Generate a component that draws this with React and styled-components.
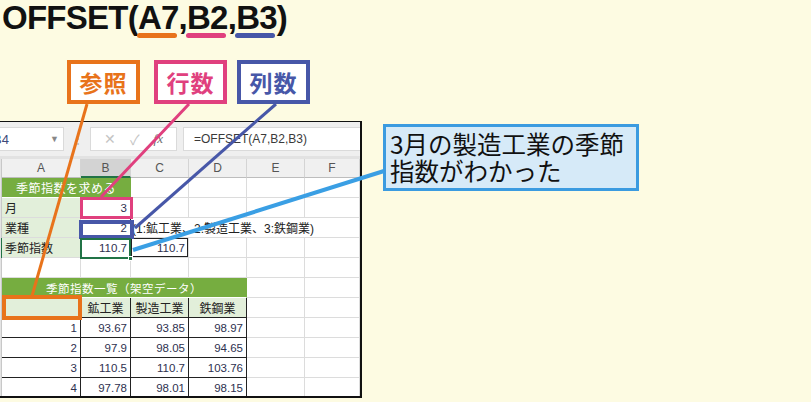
import React from "react";
import styled, { createGlobalStyle, css } from "styled-components";

const ORANGE = "#e8731b";
const PINK = "#e0407e";
const BLUE = "#4757a8";
const SKY = "#3a9fe4";
const BAND = "#76ad40";
const PALE = "#e2efda";

const GlobalStyle = createGlobalStyle`
  html, body { margin: 0; padding: 0; background: #fdfbe2; }
`;

const Page = styled.div`
  position: relative;
  width: 811px;
  height: 402px;
  overflow: hidden;
  background: #fdfbe2;
  font-family: "Liberation Sans", "Noto Sans CJK JP", sans-serif;
`;

const Title = styled.h1`
  margin: 0;
  padding: 1px 0 0 2px;
  font-size: 33px;
  line-height: 33px;
  font-weight: 700;
  letter-spacing: -0.75px;
  color: #111;
`;

const Arg = styled.span`
  position: relative;

  &::after {
    content: "";
    position: absolute;
    left: -1px;
    right: 2px;
    bottom: -2px;
    height: 5px;
    border-radius: 3px;
    background: ${({ $color }) => $color};
  }
`;

const LabelRow = styled.div`
  display: flex;
  padding-left: 67px;
  margin-top: 26px;
`;

const Label = styled.div`
  box-sizing: border-box;
  width: 73px;
  height: 44px;
  margin-left: ${({ $gap }) => $gap || 0}px;
  border: 4px solid ${({ $color }) => $color};
  background: #fff;
  color: ${({ $color }) => $color};
  display: flex;
  align-items: center;
  justify-content: center;
  font-family: "Noto Sans CJK JP", sans-serif;
  font-weight: 700;
  font-size: 23px;
  letter-spacing: 1px;
`;

const Main = styled.div`
  display: flex;
  align-items: flex-start;
  margin-top: 17px;
`;

const Sheet = styled.div`
  box-sizing: border-box;
  width: 362px;
  height: 277px;
  overflow: hidden;
  background: #fff;
  border-top: 1px solid #111;
  border-right: 2px solid #111;
  border-bottom: 2px solid #111;
`;

const Toolbar = styled.div`
  display: flex;
  align-items: center;
  height: 34px;
  background: #efefef;
  border-bottom: 3px solid #e2e2e2;
`;

const NameBox = styled.div`
  box-sizing: border-box;
  width: 64px;
  height: 24px;
  background: #fff;
  border: 1px solid #dadada;
  border-left: none;
  display: flex;
  align-items: center;
  justify-content: space-between;
  padding-right: 4px;
  overflow: hidden;
  font-size: 13px;
  color: #3c4a7a;

  span { margin-left: -7px; }
  i { font-style: normal; font-size: 9px; color: #888; }
`;

const Dots = styled.div`
  width: 26px;
  text-align: center;
  color: #b5b5b5;
  font-size: 12px;
  letter-spacing: -1px;
`;

const FxBox = styled.div`
  box-sizing: border-box;
  width: 87px;
  height: 24px;
  background: #fff;
  border: 1px solid #dadada;
  display: flex;
  align-items: center;
  justify-content: space-around;
  padding: 0 6px;
  color: #c4c4c4;
  font-size: 14px;

  em {
    font-family: "Liberation Serif", serif;
    color: #6e6e6e;
    font-size: 13px;
  }
`;

const Formula = styled.div`
  box-sizing: border-box;
  flex: 1;
  height: 24px;
  margin-left: 6px;
  background: #fff;
  border: 1px solid #dadada;
  border-right: none;
  display: flex;
  align-items: center;
  padding-left: 10px;
  font-size: 12px;
  color: #3a3a3a;
`;

const Grid = styled.div`
  display: grid;
  grid-template-columns: 2px 79px 50px 58px 58px 58px 55px;
  grid-template-rows: 19px;
  grid-auto-rows: 20px;
  font-size: 12px;
`;

const ColHead = styled.div`
  box-sizing: border-box;
  background: ${({ $active }) => ($active ? "#d3d3d3" : "#f0f0f0")};
  border-right: 1px solid #d4d4d4;
  border-bottom: ${({ $active }) => ($active ? "2px solid #217346" : "1px solid #bdbdbd")};
  color: #555;
  display: flex;
  align-items: center;
  justify-content: center;
`;

const RowHead = styled.div`
  box-sizing: border-box;
  background: #e4e4e4;
  border-right: 1px solid ${({ $active }) => ($active ? "#217346" : "#c8c8c8")};
`;

const Cell = styled.div`
  position: relative;
  box-sizing: border-box;
  grid-column: span ${({ $span }) => $span || 1};
  background: ${({ $fill }) => $fill || "#fff"};
  border-right: 1px solid ${({ $boxed }) => ($boxed ? "#222" : "#dcdcdc")};
  border-bottom: 1px solid ${({ $boxed }) => ($boxed ? "#222" : "#dcdcdc")};
  display: flex;
  align-items: center;
  justify-content: ${({ $align }) =>
    $align === "right" ? "flex-end" : $align === "center" ? "center" : "flex-start"};
  padding: 0 3px;
  white-space: nowrap;
  color: ${({ $num }) => ($num ? "#2e3150" : "#222")};
  font-size: ${({ $num }) => ($num ? "11.5px" : "12px")};

  ${({ $band }) =>
    $band &&
    css`
      background: ${BAND};
      color: #fff;
      border-right-color: ${BAND};
      border-bottom-color: #fff;
      letter-spacing: 0.5px;
    `}

  ${({ $outline }) =>
    $outline &&
    css`
      box-shadow: inset 0 0 0 1px #222;
    `}

  ${({ $mark, $w, $inset }) =>
    $mark &&
    css`
      &::after {
        content: "";
        position: absolute;
        inset: ${$inset};
        border: ${$w}px solid ${$mark};
        z-index: 2;
      }
    `}

  ${({ $selected }) =>
    $selected &&
    css`
      &::after {
        content: "";
        position: absolute;
        inset: 0 -1px -2px -1px;
        border: 2px solid #217346;
        z-index: 2;
      }
      &::before {
        content: "";
        position: absolute;
        right: -3px;
        bottom: -4px;
        width: 5px;
        height: 5px;
        background: #217346;
        border: 1px solid #fff;
        box-sizing: border-box;
        z-index: 3;
      }
    `}
`;

const Callout = styled.div`
  box-sizing: border-box;
  width: 256px;
  height: 67px;
  margin: 3px 0 0 21px;
  padding: 3px 2px 0 4px;
  background: #d6eaf8;
  border: 3px solid #3b9be0;
  font-family: "Noto Sans CJK JP", sans-serif;
  font-size: 24.5px;
  line-height: 27px;
  color: #111;
  white-space: nowrap;
  position: relative;
  z-index: 1;
`;

const Leaders = styled.svg`
  position: absolute;
  left: 0;
  top: 0;
  pointer-events: none;
  z-index: 5;
`;

const cols = ["A", "B", "C", "D", "E", "F"];
const data = [
  ["1", "93.67", "93.85", "98.97"],
  ["2", "97.9", "98.05", "94.65"],
  ["3", "110.5", "110.7", "103.76"],
  ["4", "97.78", "98.01", "98.15"],
];

const Blank = ({ n }) =>
  Array.from({ length: n }, (_, i) => <Cell key={i} />);

export default function App() {
  return (
    <Page>
      <GlobalStyle />
      <Title>
        OFFSET(<Arg $color={ORANGE}>A7</Arg>,<Arg $color={PINK}>B2</Arg>,<Arg $color={BLUE}>B3</Arg>)
      </Title>

      <LabelRow>
        <Label $color={ORANGE}>参照</Label>
        <Label $color={PINK} $gap={14}>行数</Label>
        <Label $color={BLUE} $gap={10}>列数</Label>
      </LabelRow>

      <Main>
        <Sheet>
          <Toolbar>
            <NameBox>
              <span>B4</span>
              <i>▼</i>
            </NameBox>
            <Dots>⋮</Dots>
            <FxBox>
              <span>✕</span>
              <span>✓</span>
              <em>fx</em>
            </FxBox>
            <Formula>=OFFSET(A7,B2,B3)</Formula>
          </Toolbar>

          <Grid>
            <RowHead />
            {cols.map((c) => (
              <ColHead key={c} $active={c === "B"}>{c}</ColHead>
            ))}

            <RowHead />
            <Cell $band $span={2} $align="center">季節指数を求める</Cell>
            <Blank n={4} />

            <RowHead />
            <Cell $fill={PALE}>月</Cell>
            <Cell $num $align="right" $boxed $mark={PINK} $w={3} $inset="-1px -3px -2px -1px">3</Cell>
            <Blank n={4} />

            <RowHead />
            <Cell $fill={PALE}>業種</Cell>
            <Cell $num $align="right" $boxed $mark={BLUE} $w={4} $inset="2px -4px -2px -2px">2</Cell>
            <Cell $span={4} style={{ paddingLeft: 1 }}>(1:鉱工業、2:製造工業、3:鉄鋼業)</Cell>

            <RowHead $active />
            <Cell $fill={PALE}>季節指数</Cell>
            <Cell $num $align="right" $selected>110.7</Cell>
            <Cell $num $align="right" $outline>110.7</Cell>
            <Blank n={3} />

            <RowHead />
            <Blank n={6} />

            <RowHead />
            <Cell $band $span={4} $align="center" style={{ fontSize: 11.5 }}>
              季節指数一覧（架空データ）
            </Cell>
            <Blank n={2} />

            <RowHead />
            <Cell $fill={PALE} $boxed $mark={ORANGE} $w={4} $inset="-3px -2px -3px 0" />
            <Cell $fill={PALE} $boxed $align="center">鉱工業</Cell>
            <Cell $fill={PALE} $boxed $align="center">製造工業</Cell>
            <Cell $fill={PALE} $boxed $align="center">鉄鋼業</Cell>
            <Blank n={2} />

            {data.map((row) => (
              <React.Fragment key={row[0]}>
                <RowHead />
                {row.map((v, i) => (
                  <Cell key={i} $num $boxed $align="right">{v}</Cell>
                ))}
                <Blank n={2} />
              </React.Fragment>
            ))}
          </Grid>
        </Sheet>

        <Callout>
          3月の製造工業の季節
          <br />
          指数がわかった
        </Callout>
      </Main>

      <Leaders width="811" height="402" viewBox="0 0 811 402">
        <line x1="87" y1="104" x2="32" y2="296" stroke={ORANGE} strokeWidth="3" />
        <line x1="189" y1="104" x2="101" y2="197" stroke={PINK} strokeWidth="3" />
        <line x1="276" y1="104" x2="135" y2="228" stroke={BLUE} strokeWidth="3" />
        <line x1="133" y1="250" x2="384" y2="171" stroke={SKY} strokeWidth="4" />
      </Leaders>
    </Page>
  );
}
